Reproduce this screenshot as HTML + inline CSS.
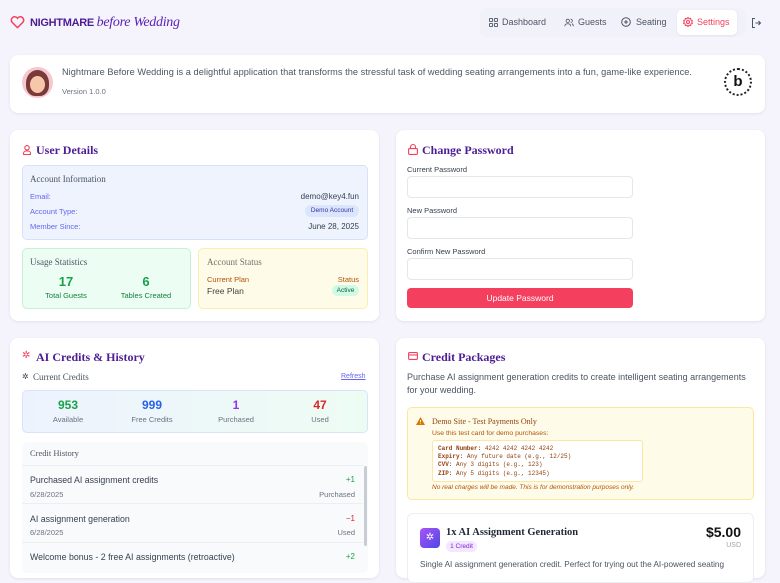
<!DOCTYPE html>
<html><head><meta charset="utf-8"><style>
*{box-sizing:border-box;margin:0;padding:0}
body{width:780px;height:573px;overflow:hidden;background:#f5f4fc;font-family:"Liberation Sans",sans-serif;position:relative;color:#374151}
.a{position:absolute}
.card{position:absolute;background:#fff;border-radius:8px;box-shadow:0 1px 3px rgba(0,0,0,.08)}
.serif{font-family:"Liberation Serif",serif}
.h{font-family:"Liberation Serif",serif;font-weight:bold;color:#4c1d95;font-size:12px}
.t{font-size:8px}
.lbl{font-size:7.5px;color:#6366f1}
.in{position:absolute;left:407px;width:226px;height:22px;border:1px solid #e5e7eb;border-radius:4px;background:#fff}
.nav{font-size:9px;color:#4b5563}
svg{overflow:visible}
</style></head><body>
<svg class="a" style="left:10px;top:15px" width="15" height="14" viewBox="0 0 24 22"><path d="M12 20 3 11a5 5 0 0 1 9-6 5 5 0 0 1 9 6z" fill="none" stroke="#f43f5e" stroke-width="2.4"/></svg>
<div class="a" style="left:30px;top:15px;font-size:11px;font-weight:bold;color:#4c1d95;letter-spacing:-.3px">NIGHTMARE <span class="serif" style="font-style:italic;font-weight:normal;font-size:14px;color:#5b21b6">before Wedding</span></div>
<div class="a" style="left:480px;top:8px;width:266px;height:29px;background:#f1f1fa;border-radius:8px"></div>
<svg class="a" style="left:489px;top:18px" width="9" height="9" viewBox="0 0 10 10" fill="none" stroke="#4b5563" stroke-width="1"><rect x=".5" y=".5" width="3.5" height="3.5" rx=".8"/><rect x="6" y=".5" width="3.5" height="3.5" rx=".8"/><rect x=".5" y="6" width="3.5" height="3.5" rx=".8"/><rect x="6" y="6" width="3.5" height="3.5" rx=".8"/></svg>
<div class="a nav" style="left:502px;top:17px">Dashboard</div>
<svg class="a" style="left:564px;top:18px" width="10" height="9" viewBox="0 0 12 10" fill="none" stroke="#4b5563" stroke-width="1"><circle cx="4.5" cy="3" r="2"/><path d="M1 9.5c0-2 1.5-3 3.5-3s3.5 1 3.5 3M8 1a2 2 0 0 1 0 4M9.5 6.5c1 .4 1.7 1.4 1.7 3"/></svg>
<div class="a nav" style="left:578px;top:17px">Guests</div>
<svg class="a" style="left:621px;top:17px" width="10" height="10" viewBox="0 0 10 10" fill="none" stroke="#4b5563" stroke-width="1"><circle cx="5" cy="5" r="4.3"/><path d="M5 3v4M3 5h4"/></svg>
<div class="a nav" style="left:636px;top:17px">Seating</div>
<div class="a" style="left:677px;top:10px;width:60px;height:25px;background:#fff;border-radius:5px;box-shadow:0 1px 2px rgba(0,0,0,.06)"></div>
<svg class="a" style="left:683px;top:17px" width="10" height="10" viewBox="0 0 10 10" fill="none" stroke="#f43f5e" stroke-width="1"><circle cx="5" cy="5" r="1.5"/><path d="M5 .5l1 1.3 1.6-.4.3 1.6 1.5.7-.7 1.3.7 1.3-1.5.7-.3 1.6-1.6-.4L5 9.5 4 8.2l-1.6.4-.3-1.6L.6 6.3 1.3 5 .6 3.7l1.5-.7.3-1.6L4 1.8z"/></svg>
<div class="a nav" style="left:697px;top:17px;color:#f43f5e">Settings</div>
<svg class="a" style="left:751px;top:18px" width="10" height="10" viewBox="0 0 10 10" fill="none" stroke="#4b5563" stroke-width="1"><path d="M4 .5H1.5v9H4M4.5 5h5M7.5 3l2 2-2 2"/></svg>
<div class="card" style="left:10px;top:55px;width:755px;height:58px"></div>
<div class="a" style="left:22px;top:67px;width:31px;height:31px;border-radius:50%;background:#f3c9cf"></div>
<div class="a" style="left:26px;top:70px;width:23px;height:26px;border-radius:50% 50% 40% 40%;background:#7b3a3a"></div>
<div class="a" style="left:30px;top:76px;width:15px;height:17px;border-radius:50%;background:#f6c7a8"></div>
<div class="a" style="left:62px;top:67px;color:#4b5563;font-size:9.2px;letter-spacing:.05px">Nightmare Before Wedding is a delightful application that transforms the stressful task of wedding seating arrangements into a fun, game-like experience.</div>
<div class="a" style="left:62px;top:87px;font-size:7.5px;color:#6b7280">Version 1.0.0</div>
<div class="a" style="left:724px;top:68px;width:28px;height:28px;border-radius:50%;border:2px dotted #222;text-align:center;font-weight:bold;font-size:15px;line-height:23px;color:#111">b</div>
<div class="card" style="left:10px;top:130px;width:369px;height:191px"></div>
<svg class="a" style="left:23px;top:145px" width="8" height="10" viewBox="0 0 8 10" fill="none" stroke="#f43f5e" stroke-width="1.1"><circle cx="4" cy="2.8" r="2.2"/><path d="M.6 9.5V8.2c0-1.3 1-2.2 2.3-2.2h2.2c1.3 0 2.300.9 2.300 2.2v1.3z"/></svg>
<div class="a h" style="left:36px;top:143px">User Details</div>
<div class="a" style="left:22px;top:165px;width:346px;height:75px;background:#eef3fe;border:1px solid #d6e2fb;border-radius:5px"></div>
<div class="a serif" style="left:30px;top:174px;font-size:9px;color:#4b5563">Account Information</div>
<div class="a lbl" style="left:30px;top:192px">Email:</div><div class="a t" style="right:421px;top:192px;color:#374151">demo@key4.fun</div>
<div class="a lbl" style="left:30px;top:207px">Account Type:</div>
<div class="a" style="left:305px;top:205px;width:54px;height:12px;border-radius:6px;background:#dbe6fd;font-size:6.5px;color:#3730a3;text-align:center;line-height:12px">Demo Account</div>
<div class="a lbl" style="left:30px;top:222px">Member Since:</div><div class="a t" style="right:421px;top:222px">June 28, 2025</div>
<div class="a" style="left:22px;top:248px;width:169px;height:61px;background:#ecfdf3;border:1px solid #c6f0d6;border-radius:5px"></div>
<div class="a serif" style="left:30px;top:257px;font-size:9px;color:#4b5563">Usage Statistics</div>
<div class="a" style="left:46px;top:274px;width:40px;text-align:center;font-size:13px;font-weight:bold;color:#16a34a">17</div>
<div class="a" style="left:36px;top:291px;width:60px;text-align:center;font-size:7.5px;color:#15803d">Total Guests</div>
<div class="a" style="left:126px;top:274px;width:40px;text-align:center;font-size:13px;font-weight:bold;color:#16a34a">6</div>
<div class="a" style="left:111px;top:291px;width:70px;text-align:center;font-size:7.5px;color:#15803d">Tables Created</div>
<div class="a" style="left:198px;top:248px;width:170px;height:61px;background:#fefbe8;border:1px solid #fbefb0;border-radius:5px"></div>
<div class="a serif" style="left:207px;top:257px;font-size:9px;color:#78716c">Account Status</div>
<div class="a" style="left:207px;top:275px;font-size:7.5px;color:#b45309">Current Plan</div>
<div class="a" style="right:421px;top:275px;font-size:7.5px;color:#b45309">Status</div>
<div class="a" style="left:207px;top:286px;font-size:8.5px;color:#44403c">Free Plan</div>
<div class="a" style="left:332px;top:285px;width:27px;height:11px;border-radius:6px;background:#d1fae5;font-size:6.5px;color:#065f46;text-align:center;line-height:11px">Active</div>
<div class="card" style="left:396px;top:130px;width:369px;height:191px"></div>
<svg class="a" style="left:408px;top:144px" width="10" height="11" viewBox="0 0 10 11" fill="none" stroke="#f43f5e" stroke-width="1.1"><rect x=".6" y="4.6" width="8.8" height="5.8" rx="1"/><path d="M2.5 4.6V3a2.5 2.5 0 0 1 5 0v1.6"/></svg>
<div class="a h" style="left:422px;top:143px">Change Password</div>
<div class="a t" style="left:407px;top:165px;font-size:7.5px">Current Password</div>
<div class="in" style="top:176px"></div>
<div class="a t" style="left:407px;top:206px;font-size:7.5px">New Password</div>
<div class="in" style="top:217px"></div>
<div class="a t" style="left:407px;top:247px;font-size:7.5px">Confirm New Password</div>
<div class="in" style="top:258px"></div>
<div class="a" style="left:407px;top:288px;width:226px;height:20px;background:#f43f5e;border-radius:4px;color:#fff;font-size:8.5px;text-align:center;line-height:20px">Update Password</div>
<div class="card" style="left:10px;top:338px;width:369px;height:240px"></div>
<div class="a" style="left:22px;top:350px;color:#f43f5e;font-size:10px">✲</div>
<div class="a h" style="left:36px;top:350px">AI Credits &amp; History</div>
<div class="a" style="left:22px;top:372px;font-size:8px">✲</div>
<div class="a serif" style="left:33px;top:372px;font-size:9px;color:#4b5563">Current Credits</div>
<div class="a" style="left:341px;top:373px;font-size:7px;color:#6366f1;text-decoration:underline">Refresh</div>
<div class="a" style="left:22px;top:390px;width:346px;height:43px;background:linear-gradient(90deg,#edf3fe,#edfcf3);border:1px solid #d6e5fb;border-radius:5px"></div>
<div class="a" style="left:38px;top:398px;width:60px;text-align:center;font-weight:bold;font-size:12px;color:#16a34a">953</div>
<div class="a" style="left:38px;top:415px;width:60px;text-align:center;font-size:7.5px;color:#6b7280">Available</div>
<div class="a" style="left:122px;top:398px;width:60px;text-align:center;font-weight:bold;font-size:12px;color:#2563eb">999</div>
<div class="a" style="left:117px;top:415px;width:70px;text-align:center;font-size:7.5px;color:#6b7280">Free Credits</div>
<div class="a" style="left:206px;top:398px;width:60px;text-align:center;font-weight:bold;font-size:12px;color:#9333ea">1</div>
<div class="a" style="left:206px;top:415px;width:60px;text-align:center;font-size:7.5px;color:#6b7280">Purchased</div>
<div class="a" style="left:290px;top:398px;width:60px;text-align:center;font-weight:bold;font-size:12px;color:#dc2626">47</div>
<div class="a" style="left:290px;top:415px;width:60px;text-align:center;font-size:7.5px;color:#6b7280">Used</div>
<div class="a" style="left:22px;top:442px;width:346px;height:131px;background:#f9fafb;border-radius:5px"></div>
<div class="a serif" style="left:30px;top:448px;font-size:8.5px;color:#4b5563">Credit History</div>
<div class="a" style="left:22px;top:465px;width:341px;height:1px;background:#eceef2"></div>
<div class="a" style="left:22px;top:503px;width:341px;height:1px;background:#eceef2"></div>
<div class="a" style="left:22px;top:542px;width:341px;height:1px;background:#eceef2"></div>
<div class="a" style="left:364px;top:466px;width:3px;height:80px;background:#c8ccd3;border-radius:2px"></div>
<div class="a t" style="left:30px;top:475px;font-size:8.8px">Purchased AI assignment credits</div>
<div class="a" style="left:30px;top:490px;font-size:7.5px;color:#6b7280">6/28/2025</div>
<div class="a" style="right:425px;top:475px;font-size:8px;color:#16a34a">+1</div>
<div class="a" style="right:425px;top:490px;font-size:7.5px;color:#6b7280">Purchased</div>
<div class="a t" style="left:30px;top:514px;font-size:8.8px">AI assignment generation</div>
<div class="a" style="left:30px;top:528px;font-size:7.5px;color:#6b7280">6/28/2025</div>
<div class="a" style="right:425px;top:514px;font-size:8px;color:#dc2626">−1</div>
<div class="a" style="right:425px;top:528px;font-size:7.5px;color:#6b7280">Used</div>
<div class="a t" style="left:30px;top:552px;font-size:8.8px">Welcome bonus - 2 free AI assignments (retroactive)</div>
<div class="a" style="right:425px;top:552px;font-size:8px;color:#16a34a">+2</div>
<div class="card" style="left:396px;top:338px;width:369px;height:240px"></div>
<svg class="a" style="left:408px;top:352px" width="10" height="8" viewBox="0 0 10 8" fill="none" stroke="#f43f5e" stroke-width="1.1"><rect x=".6" y=".6" width="8.8" height="6.8" rx="1"/><path d="M.6 3h8.8"/></svg>
<div class="a h" style="left:422px;top:350px">Credit Packages</div>
<div class="a" style="left:407px;top:371px;font-size:9px;color:#4b5563;width:344px;line-height:13px">Purchase AI assignment generation credits to create intelligent seating arrangements for your wedding.</div>
<div class="a" style="left:407px;top:407px;width:347px;height:93px;background:#fefbe8;border:1px solid #fbe7a1;border-radius:5px"></div>
<svg class="a" style="left:416px;top:417px" width="9" height="8" viewBox="0 0 9 8"><path d="M4.5 0 9 8H0z" fill="#d97706"/><path d="M4.5 3v2.3M4.5 6.2v.6" stroke="#fff" stroke-width=".9"/></svg>
<div class="a serif" style="left:432px;top:417px;font-size:8px;color:#92400e">Demo Site - Test Payments Only</div>
<div class="a" style="left:432px;top:430px;font-size:6.8px;color:#b45309">Use this test card for demo purchases:</div>
<div class="a" style="left:432px;top:440px;width:211px;height:42px;background:#fff;border:1px solid #fbe7a1;border-radius:3px;padding:4px 5px;font-family:'Liberation Mono',monospace;font-size:6px;line-height:8.2px;color:#92400e">
<b>Card Number:</b> 4242 4242 4242 4242<br><b>Expiry:</b> Any future date (e.g., 12/25)<br><b>CVV:</b> Any 3 digits (e.g., 123)<br><b>ZIP:</b> Any 5 digits (e.g., 12345)</div>
<div class="a" style="left:432px;top:484px;font-size:6.5px;font-style:italic;color:#b45309">No real charges will be made. This is for demonstration purposes only.</div>
<div class="a" style="left:407px;top:513px;width:347px;height:70px;background:#fff;border:1px solid #eceef2;border-radius:6px"></div>
<div class="a" style="left:420px;top:528px;width:20px;height:20px;border-radius:4px;background:linear-gradient(135deg,#a855f7,#4f46e5);color:#fff;font-size:10px;text-align:center;line-height:20px">✲</div>
<div class="a serif" style="left:446px;top:527px;font-size:10.5px;font-weight:bold;color:#1f2937">1x AI Assignment Generation</div>
<div class="a" style="left:446px;top:541px;width:31px;height:11px;border-radius:5px;background:#f3e8ff;font-size:6.5px;color:#7e22ce;text-align:center;line-height:11px">1 Credit</div>
<div class="a" style="right:39px;top:524px;font-size:14px;font-weight:bold;color:#111">$5.00</div>
<div class="a" style="right:39px;top:542px;font-size:7px;color:#9ca3af">USD</div>
<div class="a" style="left:420px;top:560px;font-size:8.2px;color:#4b5563">Single AI assignment generation credit. Perfect for trying out the AI-powered seating</div>
</body></html>
